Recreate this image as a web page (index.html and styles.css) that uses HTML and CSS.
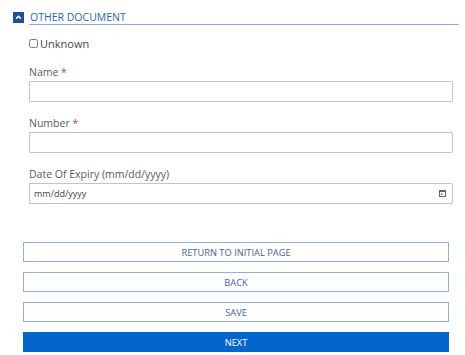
FILE: index.html
```html
<!DOCTYPE html>
<html lang="en">

<head>
    <meta charset="UTF-8">
    <meta name="viewport" content="width=device-width, initial-scale=1.0">
    <title>Other document</title>
    <link rel="stylesheet" href="styles.css">
</head>

<body>
    <div class="section">
        <div class="section-head">
            <span class="toggle">
                <svg width="11" height="11" viewBox="0 0 11 11"><rect width="11" height="11" fill="#1b4fa0"/><path d="M3.2 6.6 L5.5 4.3 L7.8 6.6" fill="none" stroke="#fff" stroke-width="1.6"/></svg>
            </span>
            <span class="section-title">OTHER DOCUMENT</span>
        </div>

        <div class="fields">
            <label class="check"><input type="checkbox" id="unknown"><span>Unknown</span></label>

            <div class="field">
                <label for="name">Name <span class="req">*</span></label>
                <input type="text" id="name">
            </div>

            <div class="field">
                <label for="number">Number <span class="req">*</span></label>
                <input type="text" id="number">
            </div>

            <div class="field">
                <label for="expiry">Date Of Expiry (mm/dd/yyyy)</label>
                <div class="date-box">
                    <span class="date-ph">mm/dd/yyyy</span>
                    <svg class="cal" width="7" height="7" viewBox="0 0 7 7"><rect x="0.5" y="0.5" width="6" height="6" fill="none" stroke="#666"/><rect x="0.5" y="0.5" width="6" height="1.5" fill="#666"/><rect x="2" y="3.5" width="1.5" height="1.5" fill="#666"/></svg>
                </div>
            </div>
        </div>

        <div class="actions">
            <button class="btn">RETURN TO INITIAL PAGE</button>
            <button class="btn">BACK</button>
            <button class="btn">SAVE</button>
            <button class="btn primary">NEXT</button>
        </div>
    </div>
</body>

</html>
```

FILE: styles.css
```css
* {
    margin: 0;
    padding: 0;
    box-sizing: border-box;
    font-family: 'Open Sans', sans-serif;
}

body {
    background: #fff;
    color: #555;
}

.section {
    padding: 10px 6px 0 13px;
}

.section-head {
    display: flex;
    align-items: center;
    height: 14px;
}

.toggle {
    display: flex;
    width: 11px;
    height: 11px;
    margin-right: 5px;
}

.section-title {
    flex: 1;
    font-size: 10.5px;
    line-height: 14px;
    color: #2c64b4;
    border-bottom: 1px solid #8caee0;
    padding-left: 1px;
}

.fields {
    padding: 0 6px 0 16px;
}

.check {
    display: flex;
    align-items: center;
    margin-top: 12px;
    font-size: 11px;
    color: #444;
}

.check input {
    width: 9px;
    height: 9px;
    margin-right: 2px;
}

.field {
    margin-top: 14px;
}

.field label {
    display: block;
    font-size: 10.5px;
    line-height: 14px;
    color: #5a5a5a;
    margin-bottom: 2px;
}

.req {
    color: #c9413f;
}

.field input,
.date-box {
    display: block;
    width: 100%;
    height: 21px;
    border: 1px solid #c4c4c4;
    border-radius: 1px;
    background: #fff;
}

.date-box {
    display: flex;
    align-items: center;
    justify-content: space-between;
    padding: 0 6px 0 4px;
}

.date-ph {
    font-size: 9px;
    color: #444;
}

.actions {
    display: flex;
    flex-direction: column;
    gap: 10px;
    padding: 38px 10px 0 10px;
}

.btn {
    height: 20px;
    border: 1px solid #8db0e6;
    background: #fff;
    color: #40649e;
    font-size: 9.3px;
    cursor: pointer;
}

.btn.primary {
    background: #0366cc;
    border-color: #0366cc;
    color: #fff;
}
```
